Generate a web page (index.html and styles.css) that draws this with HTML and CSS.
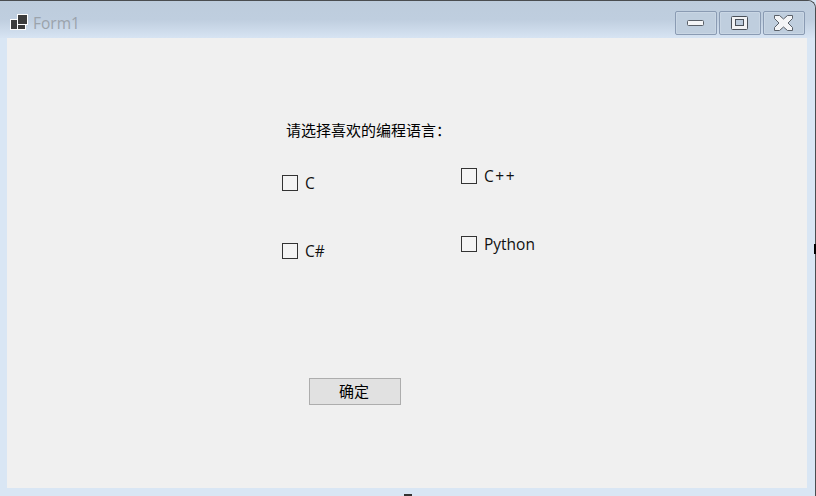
FILE: index.html
```html
<!DOCTYPE html>
<html lang="zh">
<head>
<meta charset="utf-8">
<title>Form1</title>
<link rel="stylesheet" href="styles.css">
</head>
<body>
<div class="window">
  <header class="titlebar">
    <svg class="app-icon" width="18" height="16" viewBox="0 0 18 16">
      <rect x="0.5" y="5.5" width="7" height="10" fill="#3c3c3c" stroke="#fff"/>
      <rect x="7.5" y="0.5" width="10" height="10" fill="#3c3c3c" stroke="#fff"/>
      <rect x="7.5" y="10.5" width="8" height="5" fill="#3c3c3c" stroke="#fff"/>
    </svg>
    <span class="form-title">Form1</span>
    <div class="controls">
      <button class="ctl">
        <svg width="20" height="10" viewBox="0 0 20 10"><rect x="1.5" y="2.500" width="16" height="5" rx="1" fill="#f4f5f7" stroke="#5a6068"/></svg>
      </button>
      <button class="ctl">
        <svg width="20" height="18" viewBox="0 0 20 18"><rect x="1.500" y="2.500" width="16" height="13" rx="1" fill="#f2f3f5" stroke="#4a5058"/><rect x="5.500" y="5.500" width="8" height="6" fill="#bccbdc" stroke="#4a5058"/></svg>
      </button>
      <button class="ctl">
        <svg width="20" height="18" viewBox="0 0 20 18"><path d="M0.500 1.500h5l4 3.500 4-3.500h5v3l-4.500 4.500 4.500 4.500v3h-5l-4-3.500-4 3.500h-5v-3l4.500-4.500-4.500-4.500z" fill="#f4f5f7" stroke="#5a6068"/></svg>
      </button>
    </div>
  </header>
  <main class="client">
    <div class="prompt">请选择喜欢的编程语言：</div>
    <div class="choices">
      <div class="col col-left">
        <label class="check"><span class="box"></span><span class="cap">C</span></label>
        <label class="check"><span class="box"></span><span class="cap">C#</span></label>
      </div>
      <div class="col col-right">
        <label class="check"><span class="box"></span><span class="cap wide">C++</span></label>
        <label class="check"><span class="box"></span><span class="cap">Python</span></label>
      </div>
    </div>
    <button class="ok">确定</button>
  </main>
  <span class="edge-mark"></span>
  <span class="bottom-mark"></span>
</div>
</body>
</html>
```
FILE: styles.css
```css
* { box-sizing: border-box; }
html, body { margin: 0; padding: 0; }
body { width: 816px; height: 496px; overflow: hidden; background: #d9e6f4; }
.window {
  position: relative;
  width: 816px;
  height: 496px;
  display: flex;
  flex-direction: column;
  background: #d9e6f4;
  border-top: 1px solid #4a4d50;
  border-right: 1px solid #4a4d50;
  border-top-right-radius: 8px;
  font-family: "Open Sans", "Noto Sans CJK SC", sans-serif;
  color: #000;
}
.titlebar {
  height: 37px;
  flex: none;
  display: flex;
  align-items: flex-start;
  padding: 10px 10px 0 10px;
  background: linear-gradient(#bdccdc, #bfcedf 50%, #d7e4f3);
  border-top-right-radius: 8px;
}
.app-icon { flex: none; margin-top: 3px; }
.form-title {
  margin-left: 5px;
  font: 15.500px/24px "Open Sans", sans-serif;
  color: #9ba3ac;
}
.controls { margin-left: auto; display: flex; gap: 2px; }
.ctl {
  width: 42px;
  height: 24px;
  padding: 0;
  display: flex;
  align-items: center;
  justify-content: center;
  background: #bfcede;
  border: 1px solid #8a9bb3;
  border-radius: 2px;
  box-shadow: inset 0 0 0 1px #c9d6e4;
}
.client {
  margin-left: 7px;
  width: 800px;
  height: 450px;
  flex: none;
  background: #f0f0f0;
  padding: 82px 0 0 275px;
}
.prompt {
  margin-left: 4px;
  font: 15px/20px "Noto Sans CJK SC", sans-serif;
  height: 20px;
}
.choices { display: flex; }
.col { width: 179px; display: flex; flex-direction: column; gap: 52px; }
.col-left { padding-top: 35px; }
.col-right { padding-top: 28px; }
.check { display: flex; align-items: center; height: 16px; }
.box {
  width: 16px;
  height: 16px;
  flex: none;
  border: 1px solid #333;
  background: #f4f4f4;
}
.cap {
  margin-left: 7px;
  font: 15.500px/20px "Open Sans", "Noto Sans CJK SC", sans-serif;
  color: #111;
}
.wide { letter-spacing: 1.500px; }
.ok {
  display: block;
  width: 92px;
  height: 27px;
  margin: 119px 0 0 27px;
  padding: 0 2px 2px 0;
  background: #e1e1e1;
  border: 1px solid #adadad;
  font: 15px/20px "Noto Sans CJK SC", sans-serif;
  color: #000;
}
.edge-mark {
  position: absolute;
  right: -1px;
  top: 243px;
  width: 2px;
  height: 10px;
  background: #000;
}
.bottom-mark {
  position: absolute;
  left: 404px;
  top: 493px;
  width: 8px;
  height: 2px;
  background: #333;
}
```
